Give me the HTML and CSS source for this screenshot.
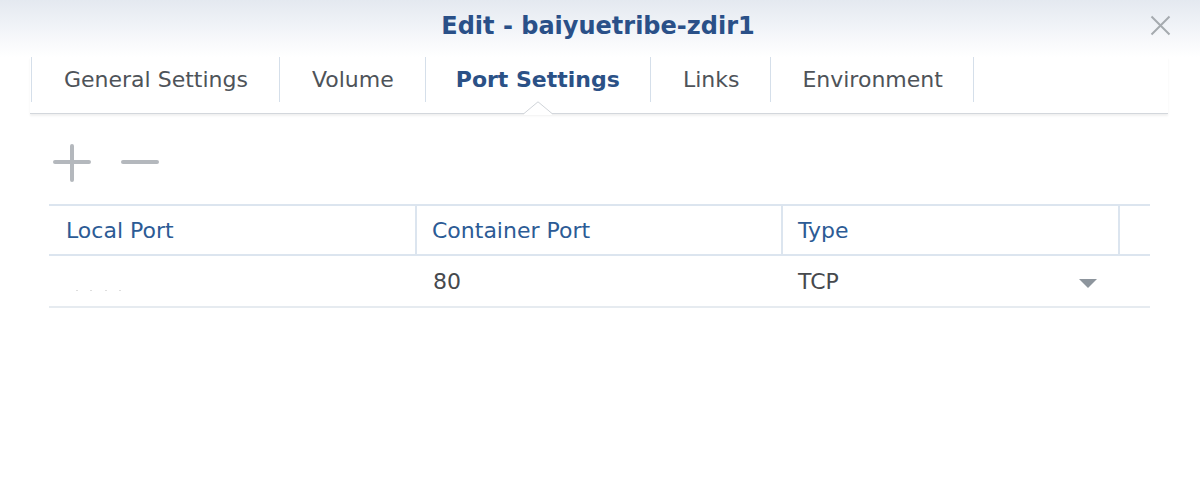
FILE: index.html
```html
<!DOCTYPE html>
<html lang="en">
<head>
<meta charset="utf-8">
<title>Edit - baiyuetribe-zdir1</title>
<link rel="stylesheet" href="styles.css">
</head>
<body>
<div class="dialog">
  <header class="titlebar">
    <h1 class="title">Edit - baiyuetribe-zdir1</h1>
    <button class="close" type="button" aria-label="Close">
      <svg width="21" height="21" viewBox="0 0 21 21"><path d="M1.5 1.5 L19.5 19.5 M19.5 1.5 L1.5 19.5" stroke="#a5aaaf" stroke-width="2" fill="none"/></svg>
    </button>
  </header>

  <nav class="tabs">
    <div class="tab">General Settings</div>
    <div class="tab">Volume</div>
    <div class="tab active">Port Settings
      <svg class="notch" width="28" height="14" viewBox="0 0 28 14"><polygon points="0,14 0,12.5 14,0.5 28,12.5 28,14" fill="#fff"/><polyline points="0,12.5 14,0.8 28,12.5" fill="none" stroke="#cfd3d8" stroke-width="1"/></svg>
    </div>
    <div class="tab">Links</div>
    <div class="tab">Environment</div>
  </nav>

  <section class="panel">
    <div class="toolbar">
      <button class="tool" type="button" aria-label="Add">
        <svg width="38" height="38" viewBox="0 0 38 38"><path d="M2 18 H36 M19 2 V36" stroke="#b4b8bd" stroke-width="4" stroke-linecap="round" fill="none"/></svg>
      </button>
      <button class="tool" type="button" aria-label="Remove">
        <svg width="38" height="38" viewBox="0 0 38 38"><path d="M2 18 H36" stroke="#b4b8bd" stroke-width="4" stroke-linecap="round" fill="none"/></svg>
      </button>
    </div>

    <div class="grid">
      <div class="hcell first">Local Port</div>
      <div class="hcell">Container Port</div>
      <div class="hcell">Type</div>
      <div class="hcell"></div>

      <div class="cell"><span class="placeholder"></span></div>
      <div class="cell">80</div>
      <div class="cell select">TCP<span class="caret"></span></div>
      <div class="cell"></div>
    </div>
  </section>
</div>
</body>
</html>
```

FILE: styles.css
```css
* { box-sizing: border-box; }

html, body {
  margin: 0;
  padding: 0;
  background: #fff;
}

body {
  font-family: "DejaVu Sans", "Liberation Sans", sans-serif;
  font-size: 22px;
  color: #46494d;
}

.dialog {
  width: 1200px;
  height: 500px;
  background: #fff;
}

.titlebar {
  height: 57px;
  display: grid;
  grid-template-columns: 1fr auto 1fr;
  align-items: start;
  background: linear-gradient(to bottom, #e4e9f0 0%, #f3f5f9 55%, #ffffff 100%);
}

.title {
  grid-column: 2;
  margin: 12px 4px 0 0;
  font-size: 24px;
  line-height: 28px;
  font-weight: bold;
  color: #2a5088;
}

.close {
  grid-column: 3;
  justify-self: end;
  margin: 15px 29px 0 0;
  padding: 0;
  border: 0;
  background: transparent;
  width: 21px;
  height: 21px;
  display: block;
}
.close svg { display: block; }

.tabs {
  display: flex;
  margin: 0 32px 0 30px;
  padding: 0 0 11px 1px;
  border-bottom: 1px solid #d3d7dc;
  box-shadow: 0 2px 2px rgba(0, 0, 0, 0.06);
}

.tab {
  position: relative;
  height: 45px;
  display: flex;
  align-items: center;
  padding: 0 31px 0 32px;
  border-left: 1px solid #d5dfea;
  color: #4e5359;
  white-space: nowrap;
}
.tab:last-child {
  border-right: 1px solid #d5dfea;
  padding: 0 30px 0 31px;
}

.tab.active {
  font-weight: bold;
  color: #2b5186;
  padding: 0 30px;
}

.notch {
  position: absolute;
  left: 50%;
  top: calc(100% - 1px);
  transform: translateX(-50%);
  display: block;
}

.panel {
  padding: 30px 50px 0 49px;
}

.toolbar {
  display: flex;
  gap: 30px;
  padding-left: 4px;
}

.tool {
  padding: 0;
  border: 0;
  background: transparent;
  width: 38px;
  height: 38px;
}
.tool svg { display: block; }

.grid {
  margin-top: 22px;
  display: grid;
  grid-template-columns: 366px 366px 337px 32px;
  grid-template-rows: 50px 52px;
  border-top: 2px solid #dce5ef;
}

.hcell {
  display: flex;
  align-items: center;
  padding-left: 15px;
  border-left: 2px solid #dce5ef;
  border-bottom: 2px solid #dce5ef;
  color: #2c5b95;
}
.hcell.first {
  border-left: 0;
  padding-left: 17px;
}

.cell {
  display: flex;
  align-items: center;
  padding-left: 17px;
  border-bottom: 2px solid #e6ebf0;
  color: #46494d;
}
.cell:nth-child(6) { padding-left: 18px; }

.cell.select {
  justify-content: space-between;
  padding-right: 21px;
}

.caret {
  width: 0;
  height: 0;
  margin-top: 4px;
  border-left: 9.5px solid transparent;
  border-right: 9.5px solid transparent;
  border-top: 9px solid #8d959d;
}

.placeholder {
  display: block;
  width: 46px;
  height: 1px;
  margin: 18px 0 0 10px;
  background: repeating-linear-gradient(to right, #dedede 0 2px, transparent 2px 14.3px);
}
```
